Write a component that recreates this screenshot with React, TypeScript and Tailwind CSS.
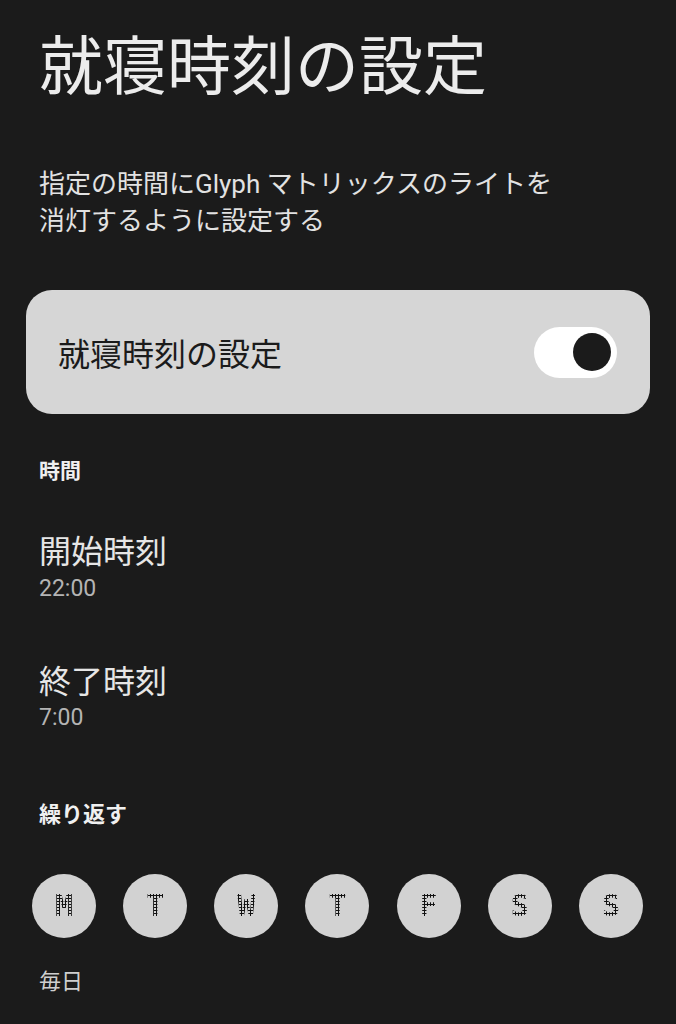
import React from "react";

const cjk = "font-['Noto_Sans_CJK_JP',sans-serif]";
const mixed = "font-['Roboto','Noto_Sans_CJK_JP',sans-serif]";

function Day({ letter }: { letter: string }) {
  return (
    <div className="flex h-[64px] w-[64px] items-center justify-center rounded-full bg-[#d2d2d2]">
      <span className="bg-[radial-gradient(circle,#111111_55%,transparent_65%)] bg-[length:3px_3px] bg-clip-text font-['DejaVu_Sans_Mono',monospace] text-[30px] leading-[30px] font-bold text-transparent">
        {letter}
      </span>
    </div>
  );
}

export default function App() {
  const days = ["M", "T", "W", "T", "F", "S", "S"];
  return (
    <div className="min-h-[1024px] w-full bg-[#1b1b1b] pb-[40px]">
      <div className={`${cjk} px-[39px] pt-[29px] text-[64px] leading-[64px] text-[#ececec]`}>
        就寝時刻の設定
      </div>
      <div className={`${mixed} mt-[73px] px-[39px] text-[26px] leading-[37px] text-[#e2e2e2]`}>
        指定の時間にGlyph マトリックスのライトを
        <br />
        消灯するように設定する
      </div>
      <div className="mx-[26px] mt-[50px] flex h-[124px] items-center justify-between rounded-[26px] bg-[#d6d6d6] pl-[32px] pr-[33px]">
        <span className={`${cjk} text-[32px] leading-[40px] text-[#1b1b1b]`}>就寝時刻の設定</span>
        <div className="flex h-[51px] w-[83px] items-center justify-end rounded-full bg-white pr-[6px]">
          <div className="h-[38px] w-[38px] rounded-full bg-[#1b1b1b]" />
        </div>
      </div>
      <div className={`${cjk} mt-[40px] px-[39px] text-[21px] leading-[30px] font-bold text-[#f0f0f0]`}>時間</div>
      <div className={`${cjk} mt-[45px] px-[39px] text-[32px] leading-[40px] text-[#e6e6e6]`}>開始時刻</div>
      <div className="mt-[5px] px-[39px] font-['Roboto',sans-serif] text-[23px] leading-[30px] text-[#b4b4b4]">22:00</div>
      <div className={`${cjk} mt-[55px] px-[39px] text-[32px] leading-[40px] text-[#e6e6e6]`}>終了時刻</div>
      <div className="mt-[4px] px-[39px] font-['Roboto',sans-serif] text-[23px] leading-[30px] text-[#b4b4b4]">7:00</div>
      <div className={`${cjk} mt-[64px] px-[39px] text-[22px] leading-[30px] font-bold text-[#f0f0f0]`}>繰り返す</div>
      <div className="mt-[47px] flex justify-between pl-[32px] pr-[33px]">
        {days.map((d, i) => (
          <Day key={i} letter={d} />
        ))}
      </div>
      <div className={`${cjk} mt-[26px] px-[39px] text-[22px] leading-[30px] text-[#cfcfcf]`}>毎日</div>
    </div>
  );
}
